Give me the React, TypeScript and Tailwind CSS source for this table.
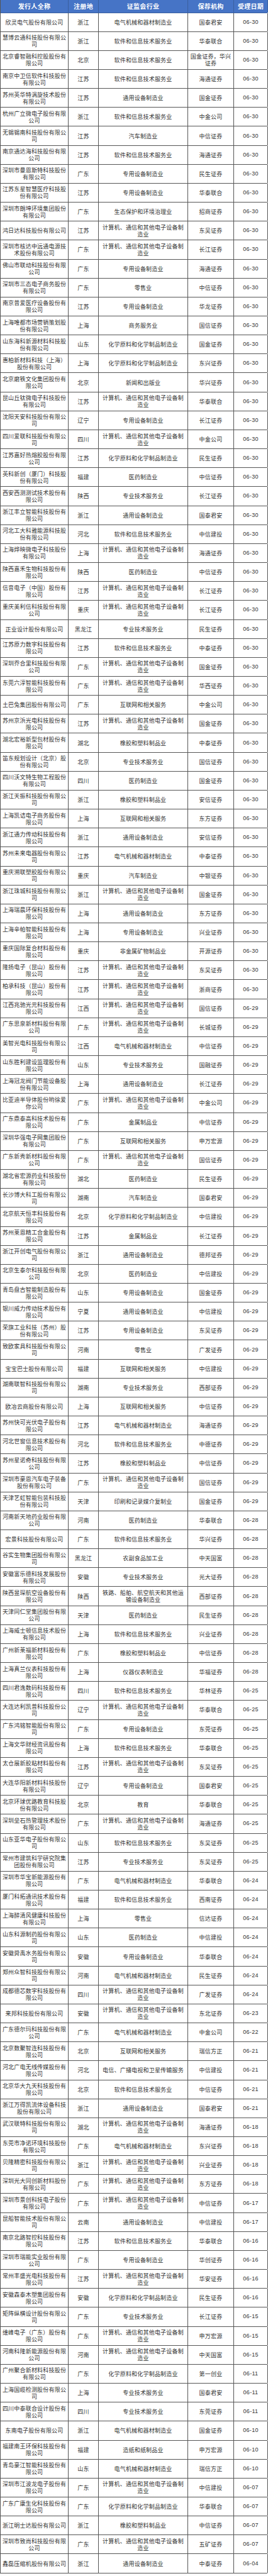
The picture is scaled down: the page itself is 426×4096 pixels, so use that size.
const JSJ = "计算机、通信和其他电子设备制造业";
const RJ = "软件和信息技术服务业";
const DQ = "电气机械和器材制造业";
const ZY = "专用设备制造业";
const TY = "通用设备制造业";
const HX = "化学原料和化学制品制造业";
const YY = "医药制造业";
const ZJ = "专业技术服务业";
const HL = "互联网和相关服务";
const XJ = "橡胶和塑料制品业";

// [发行人全称, 注册地, 证监会行业, 保荐机构, 受理日期]
const rows: [string, string, string, string, string][] = [
  ["欣灵电气股份有限公司", "浙江", DQ, "国泰君安", "06-30"],
  ["慧博云通科技股份有限公司", "浙江", RJ, "华泰联合", "06-30"],
  ["北京睿智融科控股股份有限公司", "北京", RJ, "国金证券，华兴证券", "06-30"],
  ["南京中卫信软件科技股份有限公司", "江苏", RJ, "海通证券", "06-30"],
  ["苏州英华特涡旋技术股份有限公司", "江苏", TY, "国金证券", "06-30"],
  ["杭州广立微电子股份有限公司", "浙江", RJ, "中金公司", "06-30"],
  ["无锡锡南科技股份有限公司", "江苏", "汽车制造业", "中信证券", "06-30"],
  ["南京通达海科技股份有限公司", "江苏", RJ, "海通证券", "06-30"],
  ["深圳市曼恩斯特科技股份有限公司", "广东", ZY, "民生证券", "06-30"],
  ["江苏东星智慧医疗科技股份有限公司", "江苏", ZY, "华泰联合", "06-30"],
  ["深圳市朗坤环境集团股份有限公司", "广东", "生态保护和环境治理业", "招商证券", "06-30"],
  ["鸿日达科技股份有限公司", "江苏", JSJ, "东吴证券", "06-30"],
  ["深圳市核达中远通电源技术股份有限公司", "广东", JSJ, "长江证券", "06-30"],
  ["佛山市联动科技股份有限公司", "广东", ZY, "海通证券", "06-30"],
  ["深圳市三态电子商务股份有限公司", "广东", "零售业", "中信证券", "06-30"],
  ["南京普爱医疗设备股份有限公司", "江苏", ZY, "华龙证券", "06-30"],
  ["上海唯都市场营销策划股份有限公司", "上海", "商务服务业", "国信证券", "06-30"],
  ["山东海科新源材料科技股份有限公司", "山东", HX, "国金证券", "06-30"],
  ["惠柏新材料科技（上海）股份有限公司", "上海", HX, "东兴证券", "06-30"],
  ["北京磨铁文化集团股份有限公司", "北京", "新闻和出版业", "华兴证券", "06-30"],
  ["昆山丘钛微电子科技股份有限公司", "江苏", JSJ, "华泰联合", "06-30"],
  ["沈阳天安科技股份有限公司", "辽宁", ZY, "长江证券", "06-30"],
  ["四川爱联科技股份有限公司", "四川", JSJ, "中金公司", "06-30"],
  ["江苏嘉好热熔胶股份有限公司", "江苏", HX, "民生证券", "06-30"],
  ["英科新创（厦门）科技股份有限公司", "福建", YY, "中信证券", "06-30"],
  ["西安西测测试技术股份有限公司", "陕西", ZJ, "长江证券", "06-30"],
  ["浙江丰立智能科技股份有限公司", "浙江", TY, "国泰君安", "06-30"],
  ["河北工大科雅能源科技股份有限公司", "河北", RJ, "中信建投", "06-30"],
  ["上海烨映微电子科技股份有限公司", "上海", JSJ, "海通证券", "06-30"],
  ["陕西嘉禾生物科技股份有限公司", "陕西", YY, "中信证券", "06-30"],
  ["信音电子（中国）股份有限公司", "江苏", JSJ, "长江证券", "06-30"],
  ["重庆美利信科技股份有限公司", "重庆", JSJ, "长江证券", "06-30"],
  ["正业设计股份有限公司", "黑龙江", ZJ, "民生证券", "06-30"],
  ["江苏原力数字科技股份有限公司", "江苏", RJ, "中泰证券", "06-30"],
  ["深圳乔合里科技股份有限公司", "广东", JSJ, "国金证券", "06-30"],
  ["东莞六淳智能科技股份有限公司", "广东", JSJ, "华西证券", "06-30"],
  ["土巴兔集团股份有限公司", "广东", HL, "中金公司", "06-30"],
  ["苏州京浜光电科技股份有限公司", "江苏", JSJ, "国金证券", "06-30"],
  ["湖北宏裕新型包材股份有限公司", "湖北", XJ, "中泰证券", "06-30"],
  ["笛东规划设计（北京）股份有限公司", "北京", ZJ, "国信证券", "06-30"],
  ["四川沃文特生物工程股份有限公司", "四川", YY, "国金证券", "06-30"],
  ["浙江天振科技股份有限公司", "浙江", XJ, "安信证券", "06-30"],
  ["上海凯诘电子商务股份有限公司", "上海", HL, "东方证券", "06-30"],
  ["浙江通力传动科技股份有限公司", "浙江", TY, "安信证券", "06-30"],
  ["苏州未来电器股份有限公司", "江苏", DQ, "中泰证券", "06-30"],
  ["重庆溯联塑胶股份有限公司", "重庆", "汽车制造业", "中银证券", "06-30"],
  ["浙江珠城科技股份有限公司", "浙江", JSJ, "国金证券", "06-30"],
  ["上海瑞晨环保科技股份有限公司", "上海", TY, "东方证券", "06-30"],
  ["上海辛帕智能科技股份有限公司", "上海", ZY, "兴业证券", "06-30"],
  ["重庆国际复合材料股份有限公司", "重庆", "非金属矿物制品业", "开源证券", "06-30"],
  ["隆扬电子（昆山）股份有限公司", "江苏", JSJ, "东吴证券", "06-30"],
  ["柏承科技（昆山）股份有限公司", "江苏", JSJ, "浙商证券", "06-30"],
  ["江西兆驰光元科技股份有限公司", "江西", JSJ, "国信证券", "06-29"],
  ["广东思泉新材料股份有限公司", "广东", JSJ, "长城证券", "06-29"],
  ["美智光电科技股份有限公司", "江西", DQ, "中信证券", "06-29"],
  ["山东胜利建设监理股份有限公司", "山东", ZJ, "国融证券", "06-29"],
  ["上海冠龙阀门节能设备股份有限公司", "上海", TY, "长江证券", "06-29"],
  ["比亚迪半导体股份哟徐爱你公司", "广东", JSJ, "中金公司", "06-29"],
  ["广东鼎泰高科技术股份有限公司", "广东", "金属制品业", "中信证券", "06-29"],
  ["深圳华强电子网集团股份有限公司", "广东", HL, "申万宏源", "06-29"],
  ["广东新秀新材料股份有限公司", "广东", JSJ, "国信证券", "06-29"],
  ["湖北省宏源药业科技股份有限公司", "湖北", YY, "民生证券", "06-29"],
  ["长沙博大科工股份有限公司", "湖南", "汽车制造业", "国泰君安", "06-29"],
  ["北京航天恒丰科技股份有限公司", "北京", HX, "中信建投", "06-29"],
  ["苏州莱恩精工合金股份有限公司", "江苏", "金属制品业", "长江证券", "06-29"],
  ["浙江开创电气股份有限公司", "浙江", TY, "德邦证券", "06-29"],
  ["北京生泰尔科技股份有限公司", "北京", YY, "中信建投", "06-29"],
  ["青岛盘古智能制造股份有限公司", "山东", ZY, "国金证券", "06-29"],
  ["银川威力传动技术股份有限公司", "宁夏", TY, "中信建投", "06-29"],
  ["荣旗工业科技（苏州）股份有限公司", "江苏", ZY, "东吴证券", "06-29"],
  ["致欧家具科技股份有限公司", "河南", "零售业", "广发证券", "06-29"],
  ["宝宝巴士股份有限公司", "福建", HL, "中信建投", "06-29"],
  ["湖南联智科技股份有限公司", "湖南", ZJ, "西部证券", "06-29"],
  ["欧冶云商股份有限公司", "上海", HL, "中信证券", "06-29"],
  ["苏州快可光伏电子股份有限公司", "江苏", DQ, "海通证券", "06-29"],
  ["河北世窗信息技术股份有限公司", "河北", RJ, "中德证券", "06-29"],
  ["苏州星诺奇科技股份有限公司", "江苏", XJ, "中信证券", "06-29"],
  ["深圳市豪恩汽车电子装备股份有限公司", "广东", JSJ, "国信证券", "06-29"],
  ["天津艺虹智能包装科技股份有限公司", "天津", "印刷和记录媒介复制业", "国金证券", "06-29"],
  ["河南新天地药业股份有限公司", "河南", YY, "华泰联合", "06-28"],
  ["宏景科技股份有限公司", "广东", RJ, "华兴证券", "06-28"],
  ["谷实生物集团股份有限公司", "黑龙江", "农副食品加工业", "中天国富", "06-28"],
  ["安徽富乐德科技发展股份有限公司", "安徽", ZJ, "光大证券", "06-28"],
  ["陕西昱琛航空设备股份有限公司", "陕西", "铁路、船舶、航空航天和其他运输设备制造业", "西部证券", "06-28"],
  ["天津同仁堂集团股份有限公司", "天津", YY, "民生证券", "06-28"],
  ["上海威士顿信息技术股份有限公司", "上海", RJ, "兴业证券", "06-28"],
  ["广州新莱福新材料股份有限公司", "广东", XJ, "中信证券", "06-28"],
  ["上海真兰仪表科技股份有限公司", "上海", "仪器仪表制造业", "华福证券", "06-28"],
  ["四川君逸数码科技股份有限公司", "四川", RJ, "华林证券", "06-25"],
  ["大连达利凯普科技股份公司", "辽宁", JSJ, "华泰联合", "06-25"],
  ["广东鸿铭智能股份有限公司", "广东", ZY, "东莞证券", "06-25"],
  ["上海文华财经资讯股份有限公司", "上海", RJ, "华泰联合", "06-25"],
  ["太仓展新胶粘材料股份有限公司", "江苏", JSJ, "东吴证券", "06-25"],
  ["大连华阳新材料科技股份有限公司", "辽宁", ZY, "国泰君安", "06-25"],
  ["北京环球优路教育科技股份有限公司", "北京", "教育", "华泰联合", "06-25"],
  ["深圳垒石热管理技术股份有限公司", "广东", JSJ, "海通证券", "06-25"],
  ["山东亚华电子股份有限公司", "山东", RJ, "东吴证券", "06-25"],
  ["常州市建筑科学研究院集团股份有限公司", "江苏", ZJ, "东吴证券", "06-25"],
  ["深圳市华宝新能源股份有限公司", "广东", DQ, "华泰联合", "06-24"],
  ["厦门科拓通讯技术股份有限公司", "福建", RJ, "西南证券", "06-24"],
  ["上海醉清风健康科技股份有限公司", "上海", "零售业", "信达证券", "06-24"],
  ["山东科源制药股份有限公司", "山东", YY, "中信建投", "06-24"],
  ["安徽舜禹水务股份有限公司", "安徽", ZY, "华泰联合", "06-24"],
  ["郑州众智科技股份有限公司", "河南", DQ, "民生证券", "06-24"],
  ["成都德芯数字科技股份有限公司", "四川", JSJ, "广发证券", "06-24"],
  ["来邦科技股份有限公司", "安徽", JSJ, "东北证券", "06-23"],
  ["广东德尔玛科技股份有限公司", "广东", DQ, "中金公司", "06-22"],
  ["北京数聚智连科技股份有限公司", "北京", HL, "瑞信方正", "06-21"],
  ["河北广电无线传媒股份有限公司", "河北", "电信、广播电视和卫星传输服务", "中信建投", "06-21"],
  ["北京华大九天科技股份有限公司", "北京", RJ, "中信证券", "06-21"],
  ["浙江万得凯流体设备科技股份有限公司", "浙江", TY, "国泰君安", "06-21"],
  ["武汉联特科技股份有限公司", "湖北", JSJ, "海通证券", "06-18"],
  ["东莞市净诺环境科技股份有限公司", "广东", DQ, "东兴证券", "06-18"],
  ["贝隆精密科技股份有限公司", "浙江", JSJ, "兴业证券", "06-18"],
  ["深圳光大同创新材料股份有限公司", "广东", JSJ, "东方证券", "06-18"],
  ["深圳市景创科技电子股份有限公司", "广东", JSJ, "中信证券", "06-17"],
  ["昆船智能技术股份有限公司", "云南", TY, "中信建投", "06-17"],
  ["南京北路智控科技股份有限公司", "江苏", RJ, "华泰联合", "06-16"],
  ["深圳市瑞能实业股份有限公司", "广东", ZY, "华创证券", "06-16"],
  ["常州丰盛光电科技股份有限公司", "江苏", JSJ, "华安证券", "06-16"],
  ["安徽森泰木塑集团股份有限公司", "安徽", HX, "民生证券", "06-16"],
  ["矩阵纵横设计股份有限公司", "广东", ZJ, "长江证券", "06-15"],
  ["维峰电子（广东）股份有限公司", "广东", JSJ, "申万宏源", "06-15"],
  ["河南科隆新能源股份有限公司", "河南", JSJ, "中天国富", "06-15"],
  ["广州聚合新材料科技股份有限公司", "广东", HX, "第一创业", "06-11"],
  ["上海国缆检测股份有限公司", "上海", ZJ, "国泰君安", "06-11"],
  ["四川中泰联合设计股份有限公司", "四川", ZJ, "东莞证券", "06-11"],
  ["东南电子股份有限公司", "浙江", DQ, "国金证券", "06-10"],
  ["福建南王环保科技股份有限公司", "福建", "造纸和纸制品业", "申万宏源", "06-10"],
  ["青岛豪江智能科技股份有限公司", "山东", DQ, "瑞信方正", "06-10"],
  ["深圳市江波龙电子股份有限公司", "广东", JSJ, "中信建投", "06-07"],
  ["广东广康生化科技股份有限公司", "广东", HX, "华泰联合", "06-07"],
  ["浙江明士达股份有限公司", "浙江", XJ, "中信证券", "06-07"],
  ["深圳市致尚科技股份有限公司", "广东", JSJ, "五矿证券", "06-07"],
  ["鑫磊压缩机股份有限公司", "浙江", TY, "中泰证券", "06-04"],
];

const headers = ["发行人全称", "注册地", "证监会行业", "保荐机构", "受理日期"];
const pads = ["px-[2px]", "px-[2px]", "px-[5px]", "px-[3px]", "px-[2px]"];

export default function App() {
  return (
    <div
      className="w-[426px] bg-white text-[#333]"
      style={{ fontFamily: '"Noto Sans CJK SC", "Liberation Sans", sans-serif' }}
    >
      <div className="w-[425px] border-l border-[#555]">
        <div className="grid grid-cols-[108px_48px_142px_73px_54px] h-[20.5px] bg-[#4674c6] border-b border-[#3a5f9e]">
          {headers.map((h) => (
            <div
              key={h}
              className="flex items-center justify-center border-r border-[#3a5f9e] text-white text-[10px] font-bold leading-none tracking-[0.3px]"
            >
              {h}
            </div>
          ))}
        </div>
        {rows.map((r, i) => (
          <div
            key={i}
            className="grid grid-cols-[108px_48px_142px_73px_54px] h-[30.17px] border-b border-[#555]"
          >
            {r.map((c, j) => (
              <div
                key={j}
                className={`flex items-center justify-center text-center border-r border-[#555] ${pads[j]} ${
                  j === 4 ? "text-[9px] tracking-[0.3px]" : "text-[9px] tracking-[0.2px]"
                } leading-[11px]`}
                style={j === 4 ? { fontFamily: '"Liberation Sans", sans-serif' } : undefined}
              >
                <span className="break-all">{c}</span>
              </div>
            ))}
          </div>
        ))}
      </div>
    </div>
  );
}
